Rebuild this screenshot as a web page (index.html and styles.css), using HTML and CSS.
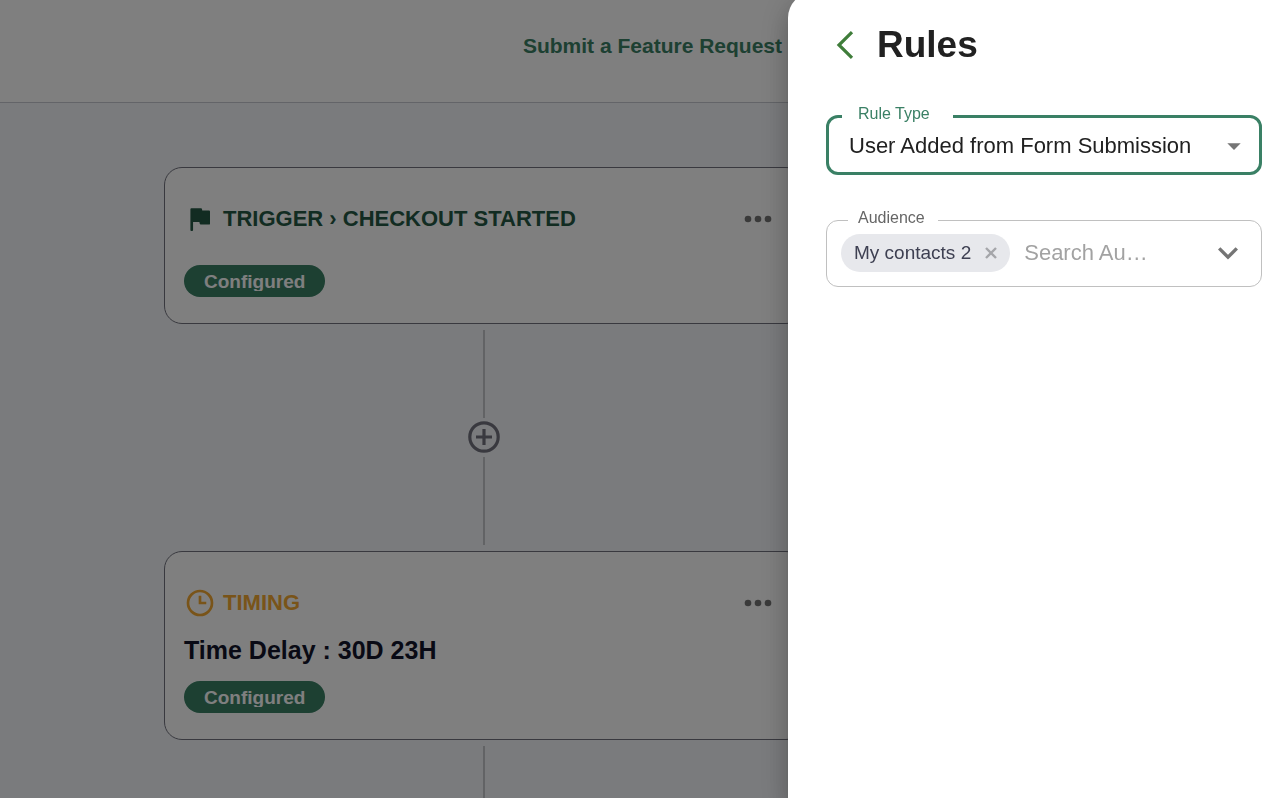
FILE: index.html
```
<!DOCTYPE html>
<html lang="en">
<head>
  <meta charset="UTF-8" />
  <meta name="viewport" content="width=device-width, initial-scale=1" />
  <title>Automation - Rules</title>
  <link rel="stylesheet" href="styles.css">
</head>
<body>

<header class="topbar">
  <a class="feature-link" href="#">Submit a Feature Request</a>
</header>

<main class="canvas">
  <div class="flow">
    <section class="card">
      <div class="card-header trigger">
        <svg class="card-icon" viewBox="0 0 24 24"><path d="M13.1 6.4 12.8 4.7H5.5v15.6h.6v-6.8h6l.4 2h6.3V6.4z" fill="currentColor" stroke="currentColor" stroke-width="1.4" stroke-linejoin="round"/></svg>
        <h3>TRIGGER › CHECKOUT STARTED</h3>
        <button class="more" type="button" aria-label="Trigger options">
          <svg viewBox="0 0 24 24"><circle cx="6" cy="12" r="2"/><circle cx="12" cy="12" r="2"/><circle cx="18" cy="12" r="2"/></svg>
        </button>
      </div>
      <div class="status"><span>Configured</span></div>
    </section>

    <div class="connector">
      <div class="line"></div>
      <button class="add" type="button" aria-label="Add step">
        <svg viewBox="0 0 32 32" fill="none" stroke="currentColor" stroke-width="3.2"><circle cx="16" cy="16" r="14.2"/><path d="M16 8v16M8 16h16"/></svg>
      </button>
      <div class="line"></div>
    </div>

    <section class="card">
      <div class="card-header timing">
        <svg class="card-icon" viewBox="0 0 24 24" fill="none" stroke="currentColor" stroke-width="2"><circle cx="12" cy="12" r="9"/><path d="M12 6.5v5.5h4.7"/></svg>
        <h3>TIMING</h3>
        <button class="more" type="button" aria-label="Timing options">
          <svg viewBox="0 0 24 24"><circle cx="6" cy="12" r="2"/><circle cx="12" cy="12" r="2"/><circle cx="18" cy="12" r="2"/></svg>
        </button>
      </div>
      <p class="card-text">Time Delay : 30D 23H</p>
      <div class="status"><span>Configured</span></div>
    </section>

    <div class="connector">
      <div class="line"></div>
    </div>
  </div>
</main>

<div class="backdrop"></div>

<aside class="drawer">
  <div class="drawer-header">
    <button class="back" type="button" aria-label="Back">
      <svg viewBox="0 0 18 28" fill="none" stroke="currentColor" stroke-width="3.2"><path d="M16 1.2 3 14l13 12.8"/></svg>
    </button>
    <h1>Rules</h1>
  </div>

  <fieldset class="field focused">
    <legend><label for="rule-type">Rule Type</label></legend>
    <div class="select-wrap">
      <select id="rule-type">
        <option>User Added from Form Submission</option>
      </select>
      <svg class="caret" viewBox="0 0 24 24"><path d="m7 10 5 5 5-5z" fill="currentColor"/></svg>
    </div>
  </fieldset>

  <fieldset class="field">
    <legend><label for="audience">Audience</label></legend>
    <div class="tags">
      <span class="chip">My contacts 2
        <button type="button" aria-label="Remove My contacts 2">
          <svg viewBox="0 0 12 12" fill="none" stroke="currentColor" stroke-width="2.4"><path d="m1 1 10 10M11 1 1 11"/></svg>
        </button>
      </span>
      <input id="audience" type="text" placeholder="Search Au…">
      <button class="expand" type="button" aria-label="Open">
        <svg viewBox="0 0 20 13" fill="none" stroke="currentColor" stroke-width="3.4"><path d="m1.2 1.4 8.8 8.8 8.8-8.8"/></svg>
      </button>
    </div>
  </fieldset>
</aside>

</body>
</html>
```
FILE: styles.css
```
* {
  box-sizing: border-box;
}

body {
  margin: 0;
  height: 100vh;
  overflow: hidden;
  font-family: "Liberation Sans", Arial, sans-serif;
  background: #f5f7fa;
  color: #212121;
}

button {
  padding: 0;
  border: 0;
  background: none;
  cursor: pointer;
}

svg {
  display: block;
}

.topbar {
  display: flex;
  align-items: center;
  justify-content: flex-end;
  height: 103px;
  padding: 0 502px 10px 0;
  background: #fff;
  border-bottom: 1px solid #c6c9d0;
}

.feature-link {
  color: #3a8065;
  font-size: 21px;
  font-weight: bold;
  text-decoration: none;
}

.canvas {
  padding: 64px 316px 0 0;
}

.flow {
  max-width: 640px;
  margin: 0 auto;
}

.card {
  padding: 31px 25px 26px 19px;
  background: #fff;
  border: 1px solid #72737f;
  border-radius: 18px;
}

.card-header {
  display: flex;
  align-items: center;
  height: 51px;
  padding-bottom: 11px;
}

.card-header h3 {
  flex: 1;
  margin: 0 0 0 7px;
  font-size: 22px;
}

.card-icon {
  width: 32px;
  height: 32px;
}

.trigger {
  color: #255844;
}

.timing {
  color: #f3a832;
}

.more {
  color: #757575;
}

.more svg {
  width: 40px;
  height: 40px;
  fill: currentColor;
}

.card-text {
  margin: 0;
  color: #12142b;
  font-size: 25px;
  font-weight: bold;
  line-height: 32px;
}

.status {
  width: fit-content;
  margin-top: 15px;
  padding: 7px 20px 6px;
  background: #3a8065;
  border-radius: 16px;
  color: #fff;
  font-size: 19px;
  font-weight: bold;
}

.status span {
  display: block;
  line-height: 19px;
  overflow: hidden;
}

.connector {
  display: flex;
  flex-direction: column;
  align-items: center;
  padding: 6px 0;
}

.line {
  width: 2px;
  height: 88px;
  background: #c4c6ca;
}

.add {
  padding: 3px 0 4px;
  color: #72737f;
}

.add svg {
  width: 32px;
  height: 32px;
}

.backdrop {
  position: fixed;
  inset: 0;
  background: rgba(0, 0, 0, 0.5);
}

.drawer {
  position: fixed;
  top: -8px;
  right: 0;
  bottom: 0;
  width: 496px;
  padding: 28px 22px 0 38px;
  background: #fff;
  border-radius: 26px 0 0 0;
  box-shadow: 0 8px 10px -5px rgba(0, 0, 0, 0.2), 0 16px 24px 2px rgba(0, 0, 0, 0.14), 0 6px 30px 5px rgba(0, 0, 0, 0.12);
}

.drawer-header {
  display: flex;
  align-items: center;
  gap: 23px;
  height: 50px;
  padding-left: 10px;
  margin-bottom: 34px;
}

.drawer-header h1 {
  margin: 0;
  font-size: 37px;
}

.back {
  color: #3f7d3a;
}

.back svg {
  width: 18px;
  height: 28px;
}

.field {
  min-width: 0;
  margin: 0 0 33px;
  padding: 0 12px;
  border: 1px solid #c0c0c0;
  border-radius: 12px;
}

.field legend {
  margin-left: 9px;
  padding: 0 13px 4px 10px;
  color: #666;
  font-size: 16px;
  line-height: 20px;
}

.field.focused {
  border: 3px solid #3a8065;
}

.field.focused legend {
  margin-left: 1px;
  padding: 0 23px 4px 16px;
  color: #3a8065;
}

.select-wrap {
  position: relative;
  height: 44px;
}

.select-wrap select {
  width: 100%;
  height: 34px;
  padding: 0 40px 0 8px;
  appearance: none;
  border: 0;
  outline: 0;
  background: none;
  color: #212121;
  font-family: inherit;
  font-size: 22px;
}

.caret {
  position: absolute;
  top: 2px;
  right: -3px;
  width: 32px;
  height: 32px;
  color: #757575;
  pointer-events: none;
}

.tags {
  display: flex;
  align-items: center;
  height: 54px;
  padding: 0 11px 12px 2px;
}

.chip {
  display: flex;
  align-items: center;
  gap: 14px;
  height: 38px;
  padding: 0 13px;
  background: #e7e8ec;
  border-radius: 19px;
  color: #3e4052;
  font-size: 19px;
  white-space: nowrap;
}

.chip button {
  color: #a5a6aa;
}

.chip svg {
  width: 12px;
  height: 12px;
}

.tags input {
  flex: 1;
  min-width: 0;
  padding: 0 14px;
  border: 0;
  outline: 0;
  background: none;
  color: #212121;
  font-family: inherit;
  font-size: 22px;
}

.tags input::placeholder {
  color: #a2a2a2;
}

.expand {
  color: #757575;
}

.expand svg {
  width: 20px;
  height: 13px;
}
```
